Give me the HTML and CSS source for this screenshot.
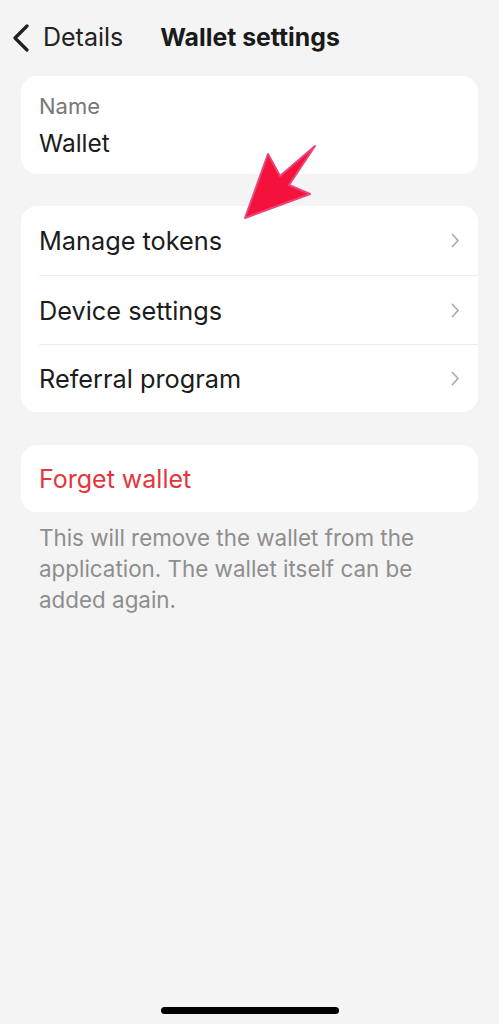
FILE: index.html
```html
<!DOCTYPE html>
<html lang="en">
<head>
    <meta charset="UTF-8">
    <title>Wallet settings</title>
    <link rel="stylesheet" href="styles.css">
</head>
<body>
    <div class="header">
        <div class="back">
            <svg width="18" height="28" viewBox="0 0 18 28"><path d="M15 2 L3 14 L15 26" fill="none" stroke="#1f1f1f" stroke-width="3.2" stroke-linecap="round" stroke-linejoin="round"/></svg>
            <span>Details</span>
        </div>
        <h1>Wallet settings</h1>
    </div>

    <div class="card name-card">
        <div class="label">Name</div>
        <div class="value">Wallet</div>
    </div>

    <div class="card list">
        <div class="row"><span>Manage tokens</span><svg class="chev" width="9" height="15" viewBox="0 0 9 15"><path d="M1.5 1.5 L7 7.5 L1.5 13.5" fill="none" stroke="#adadad" stroke-width="1.8" stroke-linecap="round" stroke-linejoin="round"/></svg></div>
        <div class="row"><span>Device settings</span><svg class="chev" width="9" height="15" viewBox="0 0 9 15"><path d="M1.5 1.5 L7 7.5 L1.5 13.5" fill="none" stroke="#adadad" stroke-width="1.8" stroke-linecap="round" stroke-linejoin="round"/></svg></div>
        <div class="row"><span>Referral program</span><svg class="chev" width="9" height="15" viewBox="0 0 9 15"><path d="M1.5 1.5 L7 7.5 L1.5 13.5" fill="none" stroke="#adadad" stroke-width="1.8" stroke-linecap="round" stroke-linejoin="round"/></svg></div>
    </div>

    <div class="card forget">Forget wallet</div>
    <p class="note">This will remove the wallet from the application. The wallet itself can be added again.</p>

    <div class="home-bar"></div>

    <!-- annotation arrow drawn over the screenshot -->
    <svg class="arrow" width="90" height="90" viewBox="0 0 90 90">
        <polygon points="5,77 28,13 40,35 75,5 49,44 70,53" fill="#f5123a" stroke="#e8457c" stroke-width="2" stroke-linejoin="round"/>
    </svg>
</body>
</html>
```

FILE: styles.css
```css
body {
    font-family: 'Inter', 'Noto Sans', sans-serif;
    margin: 0;
    min-height: 1024px;
    background-color: #f4f4f4;
    color: #1c1c1c;
    display: flex;
    flex-direction: column;
    position: relative;
}
.header {
    height: 74px;
    display: flex;
    align-items: center;
    padding: 0 12px;
    gap: 37px;
}
.back {
    display: flex;
    align-items: center;
    gap: 13px;
    font-size: 25px;
    color: #222;
}
.back svg {
    margin-top: 1px;
}
h1 {
    margin: 0;
    font-size: 24.8px;
    font-weight: 700;
    color: #1a1a1a;
}
.card {
    margin: 0 21px;
    background-color: #ffffff;
    border-radius: 16px;
}
.name-card {
    margin-top: 2px;
    padding: 16px 18px 14px;
}
.label {
    font-size: 22px;
    line-height: 28px;
    color: #777;
    margin-bottom: 6px;
}
.value {
    font-size: 24.5px;
    line-height: 34px;
}
.list {
    margin-top: 32px;
}
.row {
    height: 69px;
    margin-left: 18px;
    padding-right: 18px;
    display: flex;
    align-items: center;
    justify-content: space-between;
    font-size: 25.3px;
    box-sizing: border-box;
}
.row + .row {
    border-top: 1px solid #ececec;
}
.row:last-child {
    height: 68px;
}
.forget {
    margin-top: 33px;
    height: 67px;
    padding: 0 18px;
    display: flex;
    align-items: center;
    font-size: 25px;
    color: #e3363e;
}
.note {
    margin: 10px 21px 0;
    padding: 0 18px;
    font-size: 22.4px;
    line-height: 31px;
    color: #8e8e8e;
}
.home-bar {
    margin: auto auto 10px;
    width: 178px;
    height: 7px;
    border-radius: 4px;
    background-color: #000;
}
.arrow {
    position: absolute;
    left: 240px;
    top: 141px;
}
```
